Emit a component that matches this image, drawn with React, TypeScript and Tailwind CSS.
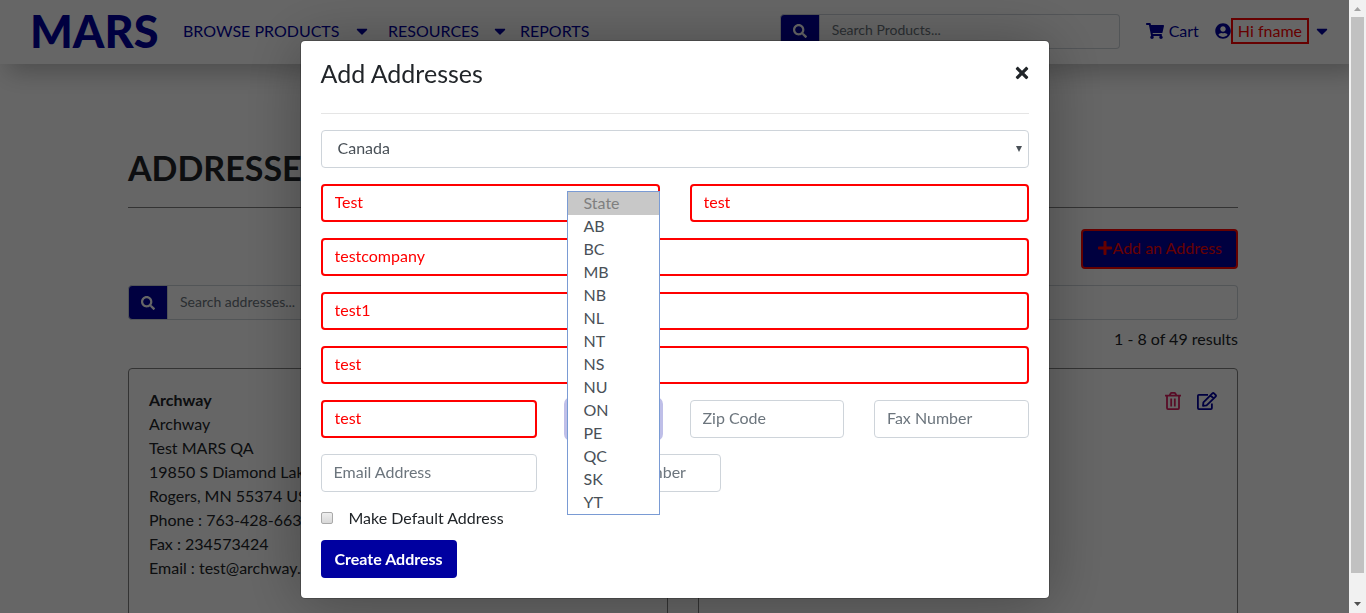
import React from "react";
import {
  FaCaretDown,
  FaPlus,
  FaSearch,
  FaShoppingCart,
  FaTimes,
  FaUserCircle,
} from "react-icons/fa";

const PROVINCES = ["AB", "BC", "MB", "NB", "NL", "NT", "NS", "NU", "ON", "PE", "QC", "SK", "YT"];

const ADDRESS_LINES = [
  "Archway",
  "Test MARS QA",
  "19850 S Diamond Lake Rd",
  "Rogers, MN 55374 US",
  "Phone : 763-428-6630",
  "Fax : 234573424",
  "Email : test@archway.com",
];

const FIELD =
  "block h-[38px] w-full min-w-0 rounded border border-[#ced4da] bg-white px-3 pb-1 text-base text-[#495057] placeholder:text-[#6c757d] placeholder:opacity-100 outline-none";
const FILLED =
  "block h-[38px] w-full min-w-0 rounded border-2 border-[#ff0000] bg-white px-3 pb-1 text-base text-[#ff0000] outline-none";

function TrashIcon() {
  return (
    <svg viewBox="0 0 16 18" className="h-[18px] w-4" fill="none" stroke="currentColor" strokeWidth="1.8" aria-hidden="true">
      <path d="M0 3.6h16M4.6 3.4l1.200-2.100q.2-.4.7-.4h3q.5 0 .7.4l1.200 2.100M2 3.800v12.300q0 1 1 1h10q1 0 1-1V3.800M6.200 6.400v8M9.800 6.400v8" />
    </svg>
  );
}

function EditIcon() {
  return (
    <svg viewBox="0 0 20 18" className="h-[18px] w-5" fill="none" stroke="currentColor" strokeWidth="1.8" strokeLinejoin="round" aria-hidden="true">
      <path d="M11 2.800H1.900q-1 0-1 1v12.300q0 1 1 1h12q1 0 1-1V11.500" />
      <path d="M6.400 10.300 15.400 1.400q.8-.8 1.600 0l1.600 1.600q.8.8 0 1.600l-9 8.800-3.600.5zM13.500 3.300l3.200 3.200" />
    </svg>
  );
}

function SearchBox({ id, label, grow }: { id: string; label: string; grow?: boolean }) {
  return (
    <form className={grow ? "flex h-[35px] w-full" : "flex h-[35px] w-[340px]"}>
      <button type="button" aria-label={label} className="flex w-10 shrink-0 items-center justify-center rounded-l border border-[#ced4da] bg-[#0000a0] text-white">
        <FaSearch className="size-[14px]" />
      </button>
      <input
        id={id}
        aria-label={label}
        placeholder={label}
        className="min-w-0 flex-1 rounded-r border border-l-0 border-[#ced4da] bg-white px-3 pb-0.5 text-sm text-[#495057] placeholder:text-[#6c757d]"
      />
    </form>
  );
}

function Header() {
  return (
    <header className="relative flex h-16 items-center bg-white pr-[35px] pb-0.5 pl-[30px] text-[#0000a0] shadow-[0_16px_24px_-8px_rgba(0,0,0,0.25)]">
      <a href="#home" className="w-[153px] text-[45px] leading-none font-black">MARS</a>
      <nav className="flex flex-1 items-center">
        <a href="#products" className="flex w-[205px] items-center gap-3.5">
          BROWSE PRODUCTS <FaCaretDown className="size-[18px]" />
        </a>
        <a href="#resources" className="flex w-[132px] items-center gap-3">
          RESOURCES <FaCaretDown className="size-[18px]" />
        </a>
        <a href="#reports">REPORTS</a>
      </nav>
      <SearchBox id="product-search" label="Search Products..." />
      <a href="#cart" className="ml-[26px] flex items-center gap-[5px]">
        <FaShoppingCart className="size-[18px]" /> Cart
      </a>
      <button type="button" className="ml-4 flex items-center">
        <FaUserCircle className="size-4" />
        <span className="flex h-[26px] items-center border-2 border-[#ff0000] px-[5px] text-[#ff0000]">Hi fname</span>
        <FaCaretDown className="ml-1 size-[18px]" />
      </button>
    </header>
  );
}

function AddressCard({ name, lines }: { name?: string; lines: string[] }) {
  return (
    <article className="flex min-h-[300px] items-start justify-between rounded border border-[#808080] px-5 pt-[19px] pb-5 leading-6">
      <address className="not-italic">
        {name && <strong className="block font-bold">{name}</strong>}
        {lines.map((line) => (
          <span key={line} className="block">{line}</span>
        ))}
      </address>
      <div className="flex gap-4 pt-1">
        <button type="button" aria-label="Delete address" className="text-[#dc1f60]"><TrashIcon /></button>
        <button type="button" aria-label="Edit address" className="text-[#0000a0]"><EditIcon /></button>
      </div>
    </article>
  );
}

function StateSelect() {
  return (
    <div className="relative col-span-2">
      <select aria-label="State" className="block h-[38px] w-full appearance-none rounded border border-[#8080ff] bg-white px-3 text-[#495057] outline-none ring-[3px] ring-[#bfbfe8]">
        <option> </option>
      </select>
      <ul role="listbox" aria-label="State options" className="absolute inset-x-0 top-[-209px] z-10 border border-[#7a9bd4] bg-white leading-[23px] text-[#495057]">
        <li role="option" aria-selected="true" className="h-[23px] bg-[#c8c8c8] px-4 leading-[22px] text-[#7f7f7f]">State</li>
        {PROVINCES.map((code) => (
          <li key={code} role="option" aria-selected="false" className="h-[23px] px-4 leading-[21px]">{code}</li>
        ))}
      </ul>
    </div>
  );
}

function AddAddressDialog() {
  return (
    <section
      role="dialog"
      aria-label="Add Addresses"
      className="w-[750px] max-w-full rounded-[5px] border border-black/20 bg-white bg-clip-padding px-5 pb-5 shadow-[0_4px_60px_rgba(0,0,0,0.3)]"
    >
      <div className="flex h-[73px] items-start justify-between border-b border-[#e5e5e5] pt-4">
        <h2 className="text-[25px] leading-8">Add Addresses</h2>
        <button type="button" aria-label="Close" className="-mr-0.5 flex h-8 items-center">
          <FaTimes className="size-[18px]" />
        </button>
      </div>
      <form className="mt-4">
        <div className="grid grid-cols-12 gap-x-[30px] gap-y-4">
          <div className="relative col-span-12">
            <select aria-label="Country" className="block h-[38px] w-full appearance-none rounded border border-[#ced4da] bg-white px-4 pb-0.5 text-[#495057]">
              <option>Canada</option>
            </select>
            <svg viewBox="0 0 6 6" className="pointer-events-none absolute top-4 right-[7px] size-[6px] fill-[#495057]" aria-hidden="true">
              <path d="M0 0h6L3 6z" />
            </svg>
          </div>
          <div className="col-span-6"><input aria-label="First Name" defaultValue="Test" className={FILLED} /></div>
          <div className="col-span-6"><input aria-label="Last Name" defaultValue="test" className={FILLED} /></div>
          <div className="col-span-12"><input aria-label="Company" defaultValue="testcompany" className={FILLED} /></div>
          <div className="col-span-12"><input aria-label="Address 1" defaultValue="test1" className={FILLED} /></div>
          <div className="col-span-12"><input aria-label="Address 2" defaultValue="test" className={FILLED} /></div>
          <div className="col-span-4"><input aria-label="City" defaultValue="test" className={FILLED} /></div>
          <StateSelect />
          <div className="col-span-3"><input aria-label="Zip Code" placeholder="Zip Code" className={FIELD} /></div>
          <div className="col-span-3"><input aria-label="Fax Number" placeholder="Fax Number" className={FIELD} /></div>
          <div className="col-span-4"><input aria-label="Email Address" placeholder="Email Address" className={FIELD} /></div>
          <div className="col-span-3"><input aria-label="Phone Number" placeholder="Phone Number" className={FIELD} /></div>
        </div>
        <label htmlFor="default-address" className="mt-3.5 mb-2.5 flex w-fit items-center gap-4 leading-6">
          <input id="default-address" type="checkbox" className="size-3 appearance-none rounded-[2px] border border-[#a9a9a9] bg-linear-to-b from-[#eeeeee] to-[#d8d8d8]" />
          Make Default Address
        </label>
        <button type="button" className="h-[38px] rounded bg-[#0000a0] px-3.5 font-bold text-white">Create Address</button>
      </form>
    </section>
  );
}

function Scrollbar() {
  return (
    <div aria-hidden="true" className="fixed inset-y-0 right-0 z-30 flex w-[17px] flex-col items-center bg-[#f1f1f1]">
      <svg viewBox="0 0 17 17" className="size-[17px] shrink-0 fill-[#a3a3a3]"><path d="M5 11h7L8.500 7z" /></svg>
      <div className="h-full w-[13px]"><div className="h-[96%] bg-[#c1c1c1]" /></div>
      <svg viewBox="0 0 17 17" className="size-[17px] shrink-0 fill-[#505050]"><path d="M5 6h7l-3.500 4z" /></svg>
    </div>
  );
}

export default function App() {
  return (
    <div className="h-screen overflow-hidden bg-white font-['Lato','Open_Sans',sans-serif] text-base text-[#212529]">
      <Header />
      <main className="mx-auto max-w-[1140px] px-[15px] pt-20">
        <h1 className="border-b border-[#808080] pb-4 text-[34px] leading-[47px] font-bold">ADDRESSES</h1>
        <div className="flex justify-end pt-[21px] pb-4">
          <button type="button" className="flex h-10 items-center rounded border-2 border-[#ff0000] bg-[#0000a0] px-3.5 pb-0.5 text-[#ff0000]">
            <FaPlus className="size-4" />
            Add an Address
          </button>
        </div>
        <SearchBox id="address-search" label="Search addresses..." grow />
        <p className="pt-[7px] pb-[9px] text-right leading-6">1 - 8 of 49 results</p>
        <div className="mt-2 grid grid-cols-2 gap-[30px]">
          <AddressCard name="Archway" lines={ADDRESS_LINES} />
          <AddressCard lines={[]} />
        </div>
      </main>
      <div className="fixed inset-0 z-20 bg-black/60 pr-[17px]">
        <div className="flex justify-center pt-10"><AddAddressDialog /></div>
      </div>
      <Scrollbar />
    </div>
  );
}
